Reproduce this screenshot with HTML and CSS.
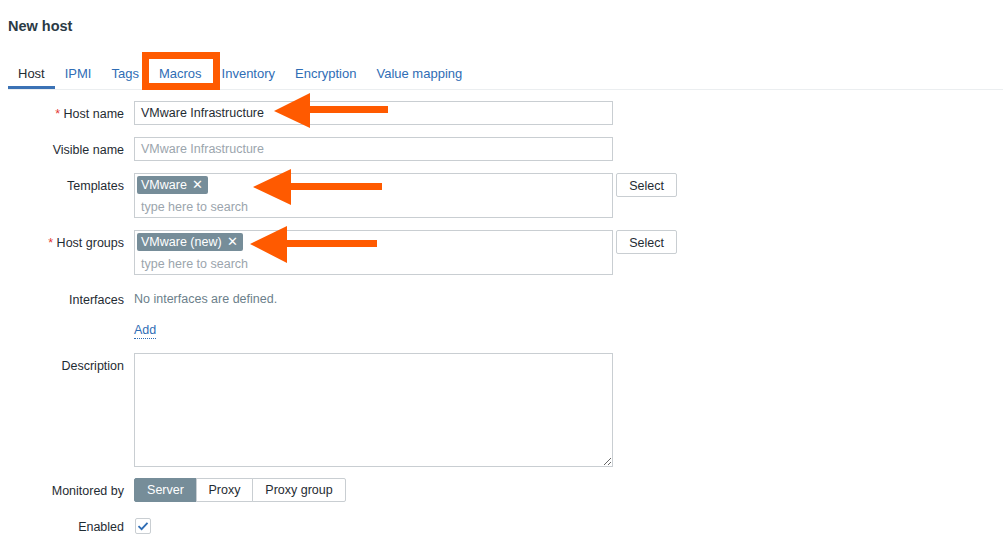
FILE: index.html
```html
<!DOCTYPE html>
<html>
<head>
<meta charset="utf-8">
<link rel="stylesheet" href="styles.css">
</head>
<body>
<div class="page">
  <h1 class="title">New host</h1>
  <nav class="tabs">
    <span class="tab active">Host</span>
    <span class="tab">IPMI</span>
    <span class="tab">Tags</span>
    <span class="tab">Macros</span>
    <span class="tab">Inventory</span>
    <span class="tab">Encryption</span>
    <span class="tab">Value mapping</span>
  </nav>
  <form class="form">
    <div class="row">
      <label class="lbl"><span class="req">*</span> Host name</label>
      <div class="field"><div class="input">VMware Infrastructure</div></div>
    </div>
    <div class="row">
      <label class="lbl">Visible name</label>
      <div class="field"><div class="input ph">VMware Infrastructure</div></div>
    </div>
    <div class="row">
      <label class="lbl">Templates</label>
      <div class="field">
        <div class="multi">
          <div class="chips"><span class="chip">VMware <span class="x">✕</span></span></div>
          <div class="search">type here to search</div>
        </div>
        <button type="button" class="btn">Select</button>
      </div>
    </div>
    <div class="row">
      <label class="lbl"><span class="req">*</span> Host groups</label>
      <div class="field">
        <div class="multi">
          <div class="chips"><span class="chip">VMware (new) <span class="x">✕</span></span></div>
          <div class="search">type here to search</div>
        </div>
        <button type="button" class="btn">Select</button>
      </div>
    </div>
    <div class="row row-if">
      <label class="lbl">Interfaces</label>
      <div class="field"><span class="muted">No interfaces are defined.</span></div>
    </div>
    <div class="row row-add">
      <label class="lbl"></label>
      <div class="field"><a class="add">Add</a></div>
    </div>
    <div class="row row-desc">
      <label class="lbl">Description</label>
      <div class="field"><textarea class="textarea"></textarea></div>
    </div>
    <div class="row row-mon">
      <label class="lbl">Monitored by</label>
      <div class="field">
        <div class="seg">
          <span class="seg-item on">Server</span>
          <span class="seg-item">Proxy</span>
          <span class="seg-item">Proxy group</span>
        </div>
      </div>
    </div>
    <div class="row">
      <label class="lbl">Enabled</label>
      <div class="field">
        <span class="check">
          <svg width="12" height="10" viewBox="0 0 12 10"><path d="M1.5 5.2 L4.6 8.2 L10.5 1.8" fill="none" stroke="#2f6db5" stroke-width="1.8"/></svg>
        </span>
      </div>
    </div>
  </form>
  <svg class="annot" width="1003" height="546" viewBox="0 0 1003 546">
    <rect x="145.5" y="55.5" width="71" height="31" fill="none" stroke="#ff5a00" stroke-width="7"/>
    <polygon points="274,111 310,93 310,106 388,106 388,113 310,113 310,128" fill="#ff5a00"/>
    <polygon points="253,187 291,169 291,183 382,183 382,190 291,190 291,205" fill="#ff5a00"/>
    <polygon points="250,244 287,226 287,240 377,240 377,247 287,247 287,263" fill="#ff5a00"/>
  </svg>
</div>
</body>
</html>
```

FILE: styles.css
```css
* { box-sizing: border-box; }
html, body { margin: 0; padding: 0; background: #fff; }
body {
  font-family: "Liberation Sans", Arial, Helvetica, sans-serif;
  font-size: 12.5px;
  color: #1f2c33;
}
.page {
  position: relative;
  width: 1003px;
  height: 546px;
  overflow: hidden;
  padding: 0 0 0 8px;
}
.title {
  margin: 0;
  padding-top: 17px;
  font-size: 14.5px;
  line-height: 18px;
  font-weight: bold;
  color: #2b3a45;
}
.tabs {
  display: flex;
  margin-top: 21px;
  border-bottom: 1px solid #ebeef0;
  height: 34px;
}
.tab {
  padding: 7px 10px 0;
  font-size: 13px;
  line-height: 22px;
  color: #2f6db5;
  border-bottom: 3px solid transparent;
  height: 33px;
}
.tab.active {
  color: #1f2c33;
  border-bottom-color: #3b72b5;
}
.form { margin-top: 11px; }
.row {
  display: flex;
  align-items: flex-start;
  margin-bottom: 12px;
}
.lbl {
  width: 116px;
  height: 24px;
  text-align: right;
  line-height: 24px;
  padding-top: 1px;
  margin-right: 10px;
  color: #1f2c33;
  flex: none;
  white-space: nowrap;
}
.req { color: #e33734; }
.field {
  display: flex;
  align-items: flex-start;
  gap: 3px;
  min-height: 24px;
  line-height: 24px;
}
.input {
  width: 479px;
  height: 24px;
  border: 1px solid #c9ced2;
  padding: 1px 6px 0;
  line-height: 21px;
  color: #1f2c33;
}
.input.ph { color: #9ba5ad; }
.multi {
  width: 479px;
  height: 45px;
  border: 1px solid #c9ced2;
  padding: 2px 2px 0 2px;
}
.chips { height: 18px; display: flex; }
.chip {
  display: inline-block;
  background: #768d99;
  color: #fff;
  height: 18px;
  line-height: 19px;
  padding: 0 5px 0 4px;
  border-radius: 2px;
}
.chip .x { font-size: 12.5px; margin-left: 2px; }
.search {
  color: #9ba5ad;
  line-height: 21px;
  height: 21px;
  margin-top: 3px;
  padding-left: 4px;
}
.btn {
  width: 61px;
  height: 24px;
  background: #fff;
  border: 1px solid #c9ced2;
  border-radius: 2px;
  font-family: inherit;
  font-size: 12.5px;
  color: #1f2c33;
  padding: 1px 0 0;
}
.muted { color: #6c7f8b; height: 24px; padding-top: 1px; line-height: 23px; }
.row-if { margin-bottom: 10px; }
.row-add { margin-bottom: 14px; }
.row-add .field { min-height: 18px; line-height: 16px; height: 18px; }
.row-add .lbl { line-height: 18px; height: 18px; }
.add {
  color: #2f6db5;
  text-decoration: none;
  border-bottom: 1px dotted #2f6db5;
  margin-top: 1px;
}
.textarea {
  width: 479px;
  height: 114px;
  border: 1px solid #c9ced2;
  border-radius: 0;
  margin: 0;
  padding: 4px 6px;
  font-family: inherit;
  font-size: 12.5px;
  display: block;
}
.row-desc { margin-bottom: 11px; }
.row-mon { margin-bottom: 12px; }
.seg { display: flex; height: 24px; }
.seg-item {
  height: 24px;
  line-height: 23px;
  border: 1px solid #c9ced2;
  margin-left: -1px;
  text-align: center;
  background: #fff;
  color: #1f2c33;
}
.seg-item:first-child { margin-left: 0; width: 63px; border-radius: 2px 0 0 2px; }
.seg-item:nth-child(2) { width: 57px; }
.seg-item:nth-child(3) { width: 94px; border-radius: 0 2px 2px 0; }
.seg-item.on { background: #768d99; border-color: #768d99; color: #fff; }
.check {
  display: inline-flex;
  align-items: center;
  justify-content: center;
  width: 16px;
  height: 16px;
  border: 1px solid #c9ced2;
  border-radius: 2px;
  margin-top: 4px;
  margin-left: 1px;
}
.annot {
  position: absolute;
  left: 0;
  top: 0;
  pointer-events: none;
}
```
